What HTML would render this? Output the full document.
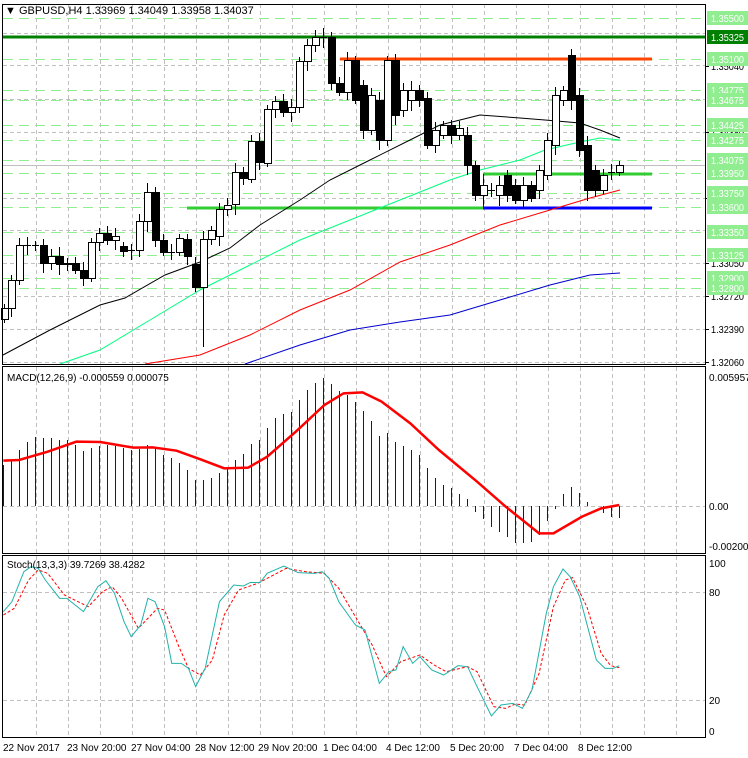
<!DOCTYPE html>
<html><head><meta charset="utf-8"><style>
html,body{margin:0;padding:0;background:#fff;width:748px;height:758px;overflow:hidden}
svg{display:block;font-family:"Liberation Sans",sans-serif}
line,rect{shape-rendering:crispEdges}
</style></head><body>
<svg id="s" width="748" height="758" xmlns="http://www.w3.org/2000/svg">
<rect width="748" height="758" fill="#fff"/>
<g id="grid"></g>
<g id="hl"></g>
<g id="ma" fill="none" stroke-width="1"></g>
<g id="cd"></g>
<g id="mc"></g>
<g id="st" fill="none"></g>
<g id="fr" fill="none" stroke="#000"></g>
<g id="lab" font-size="10"></g>
<text x="5" y="14" font-size="11" fill="#000">▼ GBPUSD,H4  1.33969 1.34049 1.33958 1.34037</text>
<text x="7" y="381" font-size="10" fill="#000">MACD(12,26,9) -0.000559 0.000075</text>
<text x="7" y="568" font-size="10" fill="#000">Stoch(13,3,3) 39.7269 38.4282</text>
<g font-size="10" fill="#000">
<text x="3" y="751">22 Nov 2017</text><text x="67" y="751">23 Nov 20:00</text><text x="131" y="751">27 Nov 04:00</text><text x="195" y="751">28 Nov 12:00</text><text x="258" y="751">29 Nov 20:00</text><text x="323" y="751">1 Dec 04:00</text><text x="386" y="751">4 Dec 12:00</text><text x="450" y="751">5 Dec 20:00</text><text x="514" y="751">7 Dec 04:00</text><text x="578" y="751">8 Dec 12:00</text>
</g>
<g font-size="10" fill="#000">
<text x="709" y="381">0.005957</text><text x="709" y="510">0.00</text><text x="709" y="550">-0.002002</text>
<text x="709" y="567">100</text><text x="709" y="596">80</text><text x="709" y="704">20</text><text x="709" y="735">0</text>
</g>
</svg>
<script>
const NS="http://www.w3.org/2000/svg";
function el(p,t,a){const e=document.createElementNS(NS,t);for(const k in a)e.setAttribute(k,a[k]);document.getElementById(p).appendChild(e);return e;}
for(let x=36;x<705;x+=32){[[4,364],[367,553],[556,737]].forEach(r=>el("grid","line",{x1:x+.5,y1:r[0],x2:x+.5,y2:r[1],stroke:"#c0c0c0","stroke-dasharray":"4,3"}));}
[33,65,99,132,198,230,263,296,329,362,506,592,700].forEach(y=>el("grid","line",{x1:3,y1:y+.5,x2:705,y2:y+.5,stroke:"#c0c0c0","stroke-dasharray":"4,3"}));
el("grid","line",{x1:3,y1:165.5,x2:705,y2:165.5,stroke:"#c0c0c0"});
const lv=[[18,"1.35500"],[59,"1.35100"],[90,"1.34775"],[100,"1.34675"],[125,"1.34425"],[140,"1.34275"],[160,"1.34075"],[173,"1.33950"],[193,"1.33750"],[207,"1.33600"],[232,"1.33350"],[255,"1.33125"],[278,"1.32900"],[288,"1.32800"]];
lv.forEach(l=>el("grid","line",{x1:3,y1:l[0]+.5,x2:705,y2:l[0]+.5,stroke:"#90ee90","stroke-dasharray":"10,6"}));
[[66,"1.35040"],[132,"1.34380"],[198,"1.33710"],[263,"1.33050"],[296,"1.32720"],[329,"1.32390"],[362,"1.32060"]].forEach(l=>{el("lab","line",{x1:705,y1:l[0]+.5,x2:709,y2:l[0]+.5,stroke:"#000"});const t=el("lab","text",{x:711,y:l[0]+4,textLength:33,lengthAdjust:"spacingAndGlyphs"});t.textContent=l[1];});
lv.forEach(l=>{el("lab","rect",{x:707,y:l[0]-7,width:41,height:14,fill:"#90ee90"});const t=el("lab","text",{x:711,y:l[0]+4,fill:"#fff",textLength:33,lengthAdjust:"spacingAndGlyphs"});t.textContent=l[1];});
el("lab","rect",{x:707,y:30,width:41,height:14,fill:"#008000"});
{const t=el("lab","text",{x:711,y:41,fill:"#fff",textLength:33,lengthAdjust:"spacingAndGlyphs"});t.textContent="1.35325";}
el("hl","line",{x1:3,y1:37,x2:705,y2:37,stroke:"#008000","stroke-width":3});
el("hl","line",{x1:340,y1:59,x2:652,y2:59,stroke:"#ff4500","stroke-width":3});
el("hl","line",{x1:483,y1:174,x2:652,y2:174,stroke:"#32cd32","stroke-width":3});
el("hl","line",{x1:187,y1:208,x2:483,y2:208,stroke:"#32cd32","stroke-width":3});
el("hl","line",{x1:483,y1:208,x2:652,y2:208,stroke:"#0000ff","stroke-width":3});
el("hl","line",{x1:483.5,y1:174,x2:483.5,y2:208,stroke:"#0000ff","stroke-width":1});
function pl(p,pts,c,w,extra){const a=Object.assign({points:pts.map(q=>q.join(",")).join(" "),stroke:c,"stroke-width":w||1,fill:"none"},extra||{});el(p,"polyline",a);}
pl("ma",[[3,355],[50,330],[100,305],[125,298],[165,275],[200,262],[230,248],[260,225],[300,200],[330,180],[370,160],[410,140],[440,125],[480,115],[520,118],[545,120],[580,123],[600,130],[620,138]],"#000");
pl("ma",[[60,364],[100,350],[150,320],[200,290],[250,265],[300,240],[350,220],[400,200],[450,180],[480,170],[520,160],[545,150],[580,142],[600,138],[620,140]],"#00ff7f");
pl("ma",[[145,364],[200,355],[250,335],[300,310],[350,290],[400,262],[450,245],[500,225],[550,210],[590,198],[620,190]],"#ff0000");
pl("ma",[[245,364],[300,345],[350,330],[400,322],[450,315],[500,300],[550,285],[590,275],[620,273]],"#0000cd");
const C=[[4,308,319,1],[11,280,308,1],[19,245,280,1],[27,245,245,1],[35,245,245,1],[43,245,263,0],[51,256,263,1],[59,256,264,0],[67,263,264,1],[75,263,270,0],[83,270,278,0],[91,242,278,1],[99,233,242,1],[107,233,240,0],[115,236,240,1],[123,246,251,0],[131,250,250,1],[139,221,250,1],[147,192,221,1],[155,192,240,0],[163,240,252,0],[171,252,252,1],[179,238,252,1],[187,239,256,0],[195,264,287,0],[203,239,287,1],[211,230,239,1],[219,209,236,1],[227,205,209,1],[235,172,204,1],[243,172,178,0],[251,141,179,1],[259,141,162,0],[267,109,163,1],[275,101,109,1],[283,101,112,0],[291,107,112,1],[299,61,107,1],[307,45,61,1],[315,37,45,1],[323,37,37,1],[331,37,83,0],[339,83,92,0],[347,60,92,1],[355,60,100,0],[363,85,130,0],[371,95,130,1],[379,100,140,0],[387,60,140,1],[395,60,115,0],[403,90,110,1],[411,90,100,1],[419,90,100,0],[427,98,145,0],[435,130,145,1],[443,125,135,1],[451,125,135,0],[459,128,135,1],[467,135,165,0],[475,165,195,0],[483,185,195,1],[491,190,190,1],[499,185,195,1],[507,175,195,0],[515,185,200,0],[523,185,200,1],[531,185,198,0],[539,170,190,1],[547,140,175,1],[555,95,145,1],[563,90,100,1],[571,55,100,0],[579,95,150,0],[587,145,190,0],[595,170,190,0],[603,175,190,1],[611,172,172,1],[619,165,172,1]];
C.forEach((c,i)=>{const w=(i*7)%11;let hi=c[1]-4-w%6,lo=c[2]+4+(w*3)%8;if(i==25)lo=347;el("cd","line",{x1:c[0]+.5,y1:hi,x2:c[0]+.5,y2:lo,stroke:"#000"});
if(c[2]-c[1]<1)el("cd","line",{x1:c[0]-3,y1:c[1]+.5,x2:c[0]+4,y2:c[1]+.5,stroke:"#000"});
else el("cd","rect",{x:c[0]-3+.5,y:c[1]+.5,width:7,height:c[2]-c[1],fill:c[3]?"#fff":"#000",stroke:"#000"});});
const H=[465,460,450,442,437,438,438,440,440,445,451,448,446,445,446,448,450,449,445,448,455,458,463,470,480,480,478,473,467,460,454,444,440,428,418,414,412,400,390,383,378,384,391,395,402,411,421,436,433,442,446,450,455,468,478,485,488,494,499,512,519,527,532,537,543,543,542,535,521,509,494,487,493,502,506,513,517,518];
H.forEach((y,i)=>{const x=3+8*i; if(x>620)return; el("mc","line",{x1:x+.5,y1:506,x2:x+.5,y2:y,stroke:"#0000ff"});});
const sig=[[7,302],[40,300],[100,275],[160,245],[210,246],[280,263],[320,262],[370,272],[420,298],[470,325],[520,323],[560,290],[620,215],[680,135],[720,100],[760,97],[800,125],[860,190],[920,270],[1000,365],[1060,440],[1130,520],[1160,520],[1220,470],[1260,445],[1298,435]].map(p=>[p[0]/2.096,360+p[1]/3]);
pl("mc",sig,"#ff0000",2.5);
const k=[[7,215],[25,185],[50,95],[65,80],[80,85],[95,120],[125,175],[140,175],[175,215],[205,140],[222,122],[240,160],[260,245],[275,290],[295,255],[310,175],[325,185],[345,260],[360,370],[380,370],[395,385],[410,440],[430,385],[460,185],[490,135],[510,138],[525,127],[545,128],[560,100],[595,78],[625,98],[660,100],[675,95],[690,115],[710,185],[745,255],[765,270],[795,430],[815,395],[830,390],[845,320],[865,370],[880,350],[905,390],[930,405],[960,377],[980,380],[1000,440],[1030,528],[1050,495],[1075,490],[1095,505],[1115,450],[1145,220],[1160,140],[1180,87],[1195,110],[1215,170],[1250,360],[1268,385],[1285,385],[1298,377]].map(p=>[p[0]/2.096,540+p[1]/3]);
const d=[[7,225],[30,205],[60,120],[80,90],[100,100],[135,165],[185,200],[215,155],[235,140],[255,175],[290,265],[330,205],[345,210],[375,320],[395,385],[420,405],[445,360],[470,225],[500,150],[540,130],[600,85],[640,95],[680,100],[710,145],[745,230],[780,315],[810,410],[840,365],[880,345],[910,375],[935,395],[980,380],[1000,395],[1035,500],[1060,505],[1080,492],[1100,495],[1130,400],[1160,200],[1185,120],[1200,113],[1230,200],[1260,340],[1280,377],[1298,383]].map(p=>[p[0]/2.096,540+p[1]/3]);
pl("st",d,"#ff0000",1,{"stroke-dasharray":"3,2"});
pl("st",k,"#20b2aa",1);
[[2.5,4.5,703,360],[2.5,366.5,703,187],[2.5,555.5,703,182]].forEach(r=>el("fr","rect",{x:r[0],y:r[1],width:r[2],height:r[3]}));
</script>
</body></html>
